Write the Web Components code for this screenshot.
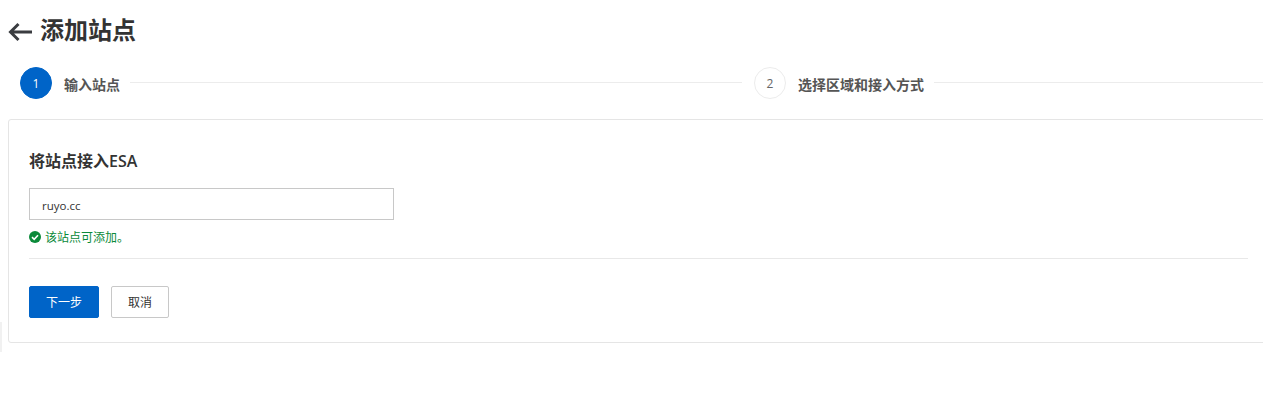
<!DOCTYPE html>
<html lang="zh">
<head>
<meta charset="utf-8">
<style>
  html, body { margin: 0; height: 405px; overflow: hidden; background: #fff; }
  body { font-family: "Open Sans", "Noto Sans CJK SC", sans-serif; color: #333; }
</style>
</head>
<body>
<esa-page>
  <esa-header slot="header">添加站点</esa-header>
  <esa-steps slot="steps">
    <esa-step num="1" active>输入站点</esa-step>
    <esa-step num="2" last>选择区域和接入方式</esa-step>
  </esa-steps>
  <esa-card>
    <h-title>将站点接入ESA</h-title>
    <esa-input value="ruyo.cc" message="该站点可添加。"></esa-input>
    <esa-actions>
      <esa-btn variant="primary">下一步</esa-btn>
      <esa-btn>取消</esa-btn>
    </esa-actions>
  </esa-card>
</esa-page>
<script>
class EsaPage extends HTMLElement {
  constructor() {
    super();
    this.attachShadow({ mode: 'open' });
    this.shadowRoot.innerHTML = `
      <style>
        :host { display: block; padding: 0 0 0 8px; }
        /* faint strip on the left edge of the window */
        .edge { position: absolute; left: 0; top: 322px; width: 2px; height: 30px; background: #f1f1f1; }
      </style>
      <slot name="header"></slot>
      <slot name="steps"></slot>
      <slot></slot>
      <div class="edge"></div>
    `;
  }
}

class EsaHeader extends HTMLElement {
  constructor() {
    super();
    this.attachShadow({ mode: 'open' });
    this.shadowRoot.innerHTML = `
      <style>
        :host { display: flex; align-items: center; height: 61px; gap: 7px; font-size: 24px; font-weight: 700; color: #333; }
        svg { display: block; margin-top: 2px; }
        span { margin-bottom: 5px; }
      </style>
      <svg width="25" height="20" viewBox="0 0 25 20" fill="none" stroke="#3a3c40" stroke-width="3">
        <path d="M10.5 2 L2.5 10 L10.5 18 M3 10 H24"/>
      </svg>
      <span><slot></slot></span>
    `;
  }
}

class EsaSteps extends HTMLElement {
  constructor() {
    super();
    this.attachShadow({ mode: 'open' });
    this.shadowRoot.innerHTML = `
      <style>
        :host { display: grid; grid-template-columns: 734px 1fr; padding-left: 12px; height: 52px; align-items: start; margin-top: 6px; }
      </style>
      <slot></slot>
    `;
  }
}

class EsaStep extends HTMLElement {
  constructor() {
    super();
    this.attachShadow({ mode: 'open' });
    const active = this.hasAttribute('active');
    const last = this.hasAttribute('last');
    this.shadowRoot.innerHTML = `
      <style>
        :host { display: flex; align-items: center; height: 32px; font-size: 14px; font-weight: 700; color: #555; }
        .dot { width: 32px; height: 32px; box-sizing: border-box; border-radius: 50%; flex: none; display: flex; align-items: center; justify-content: center; font-size: 12px; font-weight: 400;
          background: ${active ? '#0064c8' : '#fff'}; color: ${active ? '#fff' : '#666'}; border: 1px solid ${active ? '#0064c8' : '#ececec'}; }
        .label { margin-left: 12px; margin-top: 2px; white-space: nowrap; }
        .line { flex: 1; height: 1px; background: #ececec; margin: -2px ${last ? '0' : '12px'} 0 10px; }
      </style>
      <span class="dot">${this.getAttribute('num')}</span>
      <span class="label"><slot></slot></span>
      <span class="line"></span>
    `;
  }
}

class EsaCard extends HTMLElement {
  constructor() {
    super();
    this.attachShadow({ mode: 'open' });
    this.shadowRoot.innerHTML = `
      <style>
        :host { display: block; box-sizing: border-box; width: 1265px; height: 224px; border: 1px solid #e5e5e5; border-radius: 3px; padding: 30px 20px 0; background: #fff; }
      </style>
      <slot></slot>
    `;
  }
}

class HTitle extends HTMLElement {
  constructor() {
    super();
    this.attachShadow({ mode: 'open' });
    this.shadowRoot.innerHTML = `
      <style>
        :host { display: block; font-size: 16px; line-height: 22px; font-weight: 600; color: #333; }
      </style>
      <slot></slot>
    `;
  }
}

class EsaInput extends HTMLElement {
  constructor() {
    super();
    this.attachShadow({ mode: 'open' });
    this.shadowRoot.innerHTML = `
      <style>
        :host { display: block; margin-top: 16px; }
        .box { box-sizing: border-box; width: 365px; height: 32px; border: 1px solid #c8c8c8; display: flex; align-items: center; padding: 2px 0 0 12px; font-size: 11.5px; color: #333; }
        .msg { display: flex; align-items: center; gap: 4px; margin-top: 9px; height: 16px; font-size: 12px; color: #0b8a3a; }
        svg { display: block; }
      </style>
      <div class="box">${this.getAttribute('value')}</div>
      <div class="msg">
        <svg width="12" height="12" viewBox="0 0 12 12">
          <circle cx="6" cy="6" r="6" fill="#0b8a3a"/>
          <path d="M3 6.2 L5.2 8.3 L9 4.2" fill="none" stroke="#fff" stroke-width="1.6"/>
        </svg>
        <span>${this.getAttribute('message')}</span>
      </div>
    `;
  }
}

class EsaActions extends HTMLElement {
  constructor() {
    super();
    this.attachShadow({ mode: 'open' });
    this.shadowRoot.innerHTML = `
      <style>
        :host { display: flex; gap: 12px; width: 1219px; margin-top: 13px; padding-top: 27px; border-top: 1px solid #e8e8e8; }
      </style>
      <slot></slot>
    `;
  }
}

class EsaBtn extends HTMLElement {
  constructor() {
    super();
    this.attachShadow({ mode: 'open' });
    const primary = this.getAttribute('variant') === 'primary';
    this.shadowRoot.innerHTML = `
      <style>
        :host { display: inline-flex; align-items: center; justify-content: center; box-sizing: border-box; height: 32px; font-size: 12px; border-radius: 2px;
          width: ${primary ? '70px' : '58px'};
          background: ${primary ? '#0064c8' : '#fff'}; color: ${primary ? '#fff' : '#333'}; border: 1px solid ${primary ? '#0064c8' : '#c8c8c8'}; }
      </style>
      <slot></slot>
    `;
  }
}

customElements.define('esa-page', EsaPage);
customElements.define('esa-header', EsaHeader);
customElements.define('esa-steps', EsaSteps);
customElements.define('esa-step', EsaStep);
customElements.define('esa-card', EsaCard);
customElements.define('h-title', HTitle);
customElements.define('esa-input', EsaInput);
customElements.define('esa-actions', EsaActions);
customElements.define('esa-btn', EsaBtn);
</script>
</body>
</html>
